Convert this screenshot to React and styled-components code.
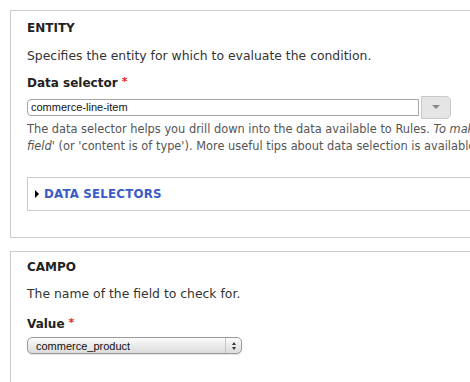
import React from "react";
import styled, { createGlobalStyle } from "styled-components";

const Global = createGlobalStyle`
  html, body {
    margin: 0;
    padding: 0;
    background: #fff;
    overflow: hidden;
  }
  body {
    font-family: "DejaVu Sans", "Liberation Sans", sans-serif;
    color: #333;
  }
`;

const Page = styled.div`
  width: 560px;
  padding: 10px 0 0 10px;
  display: flex;
  flex-direction: column;
  gap: 13px;
`;

const Fieldset = styled.section`
  border: 1px solid #ccc;
  border-bottom: ${(p) => (p.$open ? "none" : "1px solid #ccc")};
  padding: ${(p) => p.$pt || 7}px 15px 26px 16px;
  min-height: ${(p) => p.$minH || 0}px;
`;

const Legend = styled.h3`
  margin: 0;
  font-size: 12px;
  font-weight: bold;
  color: #222;
  line-height: 16px;
  text-transform: uppercase;
`;

const Description = styled.p`
  margin: ${(p) => p.$mt || 10}px 0 0;
  font-size: 12.4px;
  line-height: 18px;
  color: #333;
`;

const Label = styled.label`
  display: block;
  margin-top: ${(p) => p.$mt || 11}px;
  font-size: 12px;
  font-weight: bold;
  color: #222;
  line-height: 18px;
`;

const Required = styled.span`
  color: #e22;
  font-weight: bold;
  font-size: 11px;
  margin-left: 4px;
  vertical-align: 2px;
`;

const InputRow = styled.div`
  display: flex;
  align-items: center;
  margin-top: 4px;
  gap: 2px;
`;

const TextInput = styled.div`
  width: 392px;
  height: 17px;
  box-sizing: border-box;
  border: 1px solid #a5a5a5;
  border-radius: 4px 0 0 4px;
  font-family: "Liberation Sans", Arial, sans-serif;
  font-size: 11px;
  line-height: 15px;
  padding-left: 3px;
  color: #111;
  background: #fff;
`;

const DropButton = styled.div`
  width: 30px;
  height: 23px;
  box-sizing: border-box;
  border: 1px solid #c8c8c8;
  border-radius: 0 5px 5px 0;
  background: #e5e5e5;
  display: flex;
  align-items: center;
  justify-content: center;
  &::after {
    content: "";
    border-left: 4px solid transparent;
    border-right: 4px solid transparent;
    border-top: 4px solid #888;
    margin-top: -2px;
  }
`;

const Help = styled.div`
  margin-top: 2px;
  font-size: 11.4px;
  line-height: 17px;
  color: #555;
  white-space: nowrap;
  em {
    font-style: italic;
  }
`;

const Collapsible = styled.div`
  margin-top: 22px;
  border: 1px solid #ccc;
  height: 34px;
  box-sizing: border-box;
  display: flex;
  align-items: center;
  padding-left: 7px;
  gap: 5px;
`;

const Toggle = styled.span`
  width: 0;
  height: 0;
  border-top: 4px solid transparent;
  border-bottom: 4px solid transparent;
  border-left: 4px solid #000;
`;

const Summary = styled.a`
  font-size: 11.8px;
  font-weight: bold;
  color: #3a5bc7;
  text-decoration: none;
  letter-spacing: 0.2px;
`;

const Select = styled.div`
  margin-top: 4px;
  width: 215px;
  height: 17px;
  box-sizing: border-box;
  border: 1px solid #9a9a9a;
  border-radius: 5px;
  background: linear-gradient(#fbfbfb, #e8e8e8 60%, #dcdcdc);
  display: flex;
  align-items: center;
  font-family: "Liberation Sans", Arial, sans-serif;
  font-size: 11px;
  color: #111;
  box-shadow: 0 1px 1px rgba(0, 0, 0, 0.12);
`;

const SelectText = styled.span`
  flex: 1;
  padding-left: 8px;
`;

const SelectArrows = styled.span`
  width: 15px;
  height: 100%;
  border-left: 1px solid #c4c4c4;
  display: flex;
  flex-direction: column;
  align-items: center;
  justify-content: center;
  gap: 2px;
  &::before,
  &::after {
    content: "";
    border-left: 2.5px solid transparent;
    border-right: 2.5px solid transparent;
  }
  &::before {
    border-bottom: 3px solid #333;
  }
  &::after {
    border-top: 3px solid #333;
  }
`;

export default function App() {
  return (
    <>
      <Global />
      <Page>
        <Fieldset $pt={9}>
          <Legend>Entity</Legend>
          <Description $mt={11}>
            Specifies the entity for which to evaluate the condition.
          </Description>
          <Label $mt={8}>
            Data selector<Required>*</Required>
          </Label>
          <InputRow>
            <TextInput>commerce-line-item</TextInput>
            <DropButton />
          </InputRow>
          <Help>
            The data selector helps you drill down into the data available to
            Rules. <em>To make entity fields appear in the data selector, you may have to use the condition 'entity has</em>
            <br />
            <em>field'</em> (or 'content is of type'). More useful tips about
            data selection is available in the online documentation.
          </Help>
          <Collapsible>
            <Toggle />
            <Summary href="#">DATA SELECTORS</Summary>
          </Collapsible>
        </Fieldset>
        <Fieldset $open $minH={140}>
          <Legend>Campo</Legend>
          <Description>The name of the field to check for.</Description>
          <Label>
            Value<Required>*</Required>
          </Label>
          <Select>
            <SelectText>commerce_product</SelectText>
            <SelectArrows />
          </Select>
        </Fieldset>
      </Page>
    </>
  );
}
